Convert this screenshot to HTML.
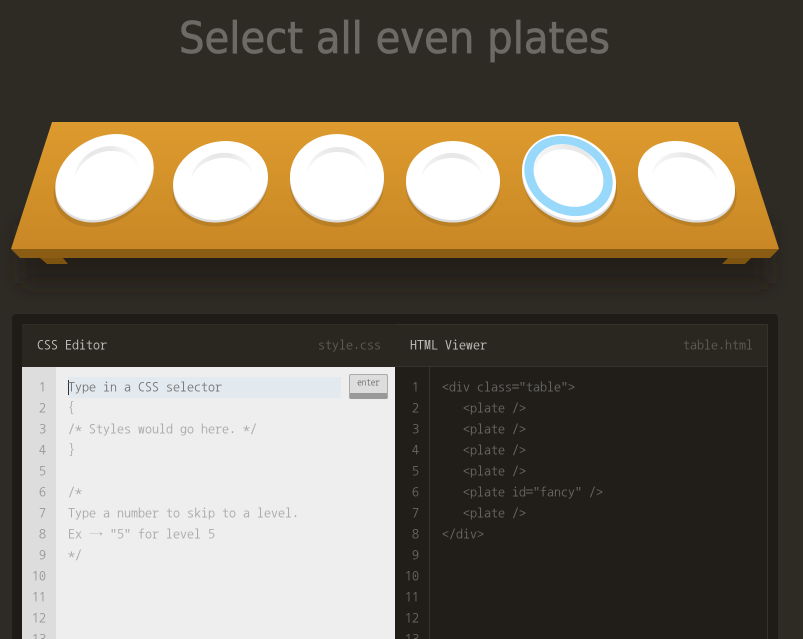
<!DOCTYPE html>
<html><head><meta charset="utf-8">
<style>
html,body{margin:0;padding:0;width:803px;height:639px;overflow:hidden;background:#2e2a24}
#w{position:absolute;left:0;top:0;width:803px;height:639px;overflow:hidden}
#s{position:absolute;left:0;top:0}
.mono{font-family:"NanumGothicCoding","Nanum Gothic Coding","IPAGothic",monospace;font-size:14px;line-height:21px;white-space:pre}
.mono i{font-style:normal;font-family:"Liberation Mono",monospace;font-size:11.67px;line-height:1}
.panel{position:absolute;left:12px;top:314px;width:766px;height:325px;background:#1f1c17;border-radius:4px 4px 0 0}
.hd{position:absolute;top:324px;height:43px;background:#2a2720;line-height:40px;box-sizing:border-box}
.abs{position:absolute}
</style></head><body>
<div id="w">
<svg id="s" width="803" height="310" viewBox="0 0 803 310">
<defs>
<linearGradient id="top" x1="0" y1="0" x2="0" y2="1"><stop offset="0" stop-color="#dd9a2e"/><stop offset="1" stop-color="#c98825"/></linearGradient>
<linearGradient id="cr" x1="0" y1="0" x2="1" y2="0"><stop offset="0" stop-color="#f6f6f6"/><stop offset=".4" stop-color="#e8e8e8"/><stop offset=".7" stop-color="#e8e8e8"/><stop offset="1" stop-color="#fbfbfb"/></linearGradient>
<filter id="b" x="-10%" y="-100%" width="120%" height="300%"><feGaussianBlur stdDeviation="9"/></filter>
</defs>
<rect width="803" height="310" fill="#2e2a24"/>
<rect x="22" y="225" width="746" height="58" fill="#221f18" opacity=".8" filter="url(#b)"/>
<text x="179" y="53" font-family="DejaVu Sans,sans-serif" font-size="44" fill="#6c6a64" stroke="#6c6a64" stroke-width=".8" textLength="431" lengthAdjust="spacingAndGlyphs">Select all even plates</text>
<polygon points="40,258 63,258 68,264 47,264" fill="#7f5310"/>
<polygon points="728,258 751,258 745,264 722,264" fill="#7f5310"/>
<polygon points="11,249 20,258 770,258 779,249" fill="#8a5c14"/>
<polygon points="52,122 738,122 779,249 11,249" fill="url(#top)"/>

<!-- plate 1 -->
<ellipse cx="0" cy="0" rx="52" ry="39.500" transform="translate(103 184) rotate(-30)" fill="#b97f24"/>
<ellipse cx="0" cy="0" rx="52" ry="39.500" transform="translate(104.500 179.500) rotate(-30)" fill="#dddddd"/>
<ellipse cx="0" cy="0" rx="52" ry="39.500" transform="translate(104.500 177) rotate(-30)" fill="#fff"/>
<ellipse cx="0" cy="0" rx="33" ry="28" transform="translate(107 175) rotate(-25)" fill="url(#cr)"/>
<ellipse cx="0" cy="0" rx="34" ry="28.500" transform="translate(107 180.500) rotate(-25)" fill="#fff"/>
<!-- plate 2 -->
<ellipse cx="0" cy="0" rx="48" ry="38.800" transform="translate(220 187) rotate(-15)" fill="#b97f24"/>
<ellipse cx="0" cy="0" rx="48" ry="38.800" transform="translate(220.500 183) rotate(-15)" fill="#dddddd"/>
<ellipse cx="0" cy="0" rx="48" ry="38.800" transform="translate(220.500 180.500) rotate(-15)" fill="#fff"/>
<ellipse cx="0" cy="0" rx="31" ry="25" transform="translate(222 178) rotate(-10)" fill="url(#cr)"/>
<ellipse cx="0" cy="0" rx="32" ry="25.500" transform="translate(222 183.500) rotate(-10)" fill="#fff"/>
<!-- plate 3 -->
<ellipse cx="337" cy="184" rx="47" ry="43" fill="#b97f24"/>
<ellipse cx="337" cy="179.500" rx="47" ry="43" fill="#dddddd"/>
<ellipse cx="337" cy="177" rx="47" ry="43" fill="#fff"/>
<ellipse cx="337.500" cy="175" rx="30.500" ry="28" fill="url(#cr)"/>
<ellipse cx="337.500" cy="180" rx="31.500" ry="28" fill="#fff"/>
<!-- plate 4 -->
<ellipse cx="453" cy="187" rx="47" ry="39.500" fill="#b97f24"/>
<ellipse cx="453" cy="183" rx="47" ry="39.500" fill="#dddddd"/>
<ellipse cx="453" cy="180.500" rx="47" ry="39.500" fill="#fff"/>
<ellipse cx="452" cy="178" rx="30.500" ry="25" fill="url(#cr)"/>
<ellipse cx="452" cy="183" rx="31.500" ry="25" fill="#fff"/>
<!-- plate 5 -->
<ellipse cx="0" cy="0" rx="48.800" ry="41" transform="translate(570 184) rotate(29.500)" fill="#b97f24"/>
<ellipse cx="0" cy="0" rx="48.800" ry="41" transform="translate(569 179.500) rotate(29.500)" fill="#dddddd"/>
<ellipse cx="0" cy="0" rx="48.800" ry="41" transform="translate(569 177) rotate(29.500)" fill="#fff"/>
<ellipse cx="0" cy="0" rx="46" ry="38" transform="translate(568.500 176) rotate(29.500)" fill="#97d8fb"/>
<ellipse cx="0" cy="0" rx="36.500" ry="29.500" transform="translate(568.500 175.500) rotate(29.500)" fill="#fff"/>
<ellipse cx="0" cy="0" rx="33" ry="27" transform="translate(567 172) rotate(20)" fill="url(#cr)"/>
<ellipse cx="0" cy="0" rx="33" ry="27" transform="translate(567 177) rotate(20)" fill="#fff"/>
<!-- plate 6 -->
<ellipse cx="0" cy="0" rx="50.500" ry="37" transform="translate(688 187) rotate(24)" fill="#b97f24"/>
<ellipse cx="0" cy="0" rx="50.500" ry="37" transform="translate(686.500 183) rotate(24)" fill="#dddddd"/>
<ellipse cx="0" cy="0" rx="50.500" ry="37" transform="translate(686.500 180.500) rotate(24)" fill="#fff"/>
<ellipse cx="0" cy="0" rx="33" ry="26" transform="translate(685 179) rotate(18)" fill="url(#cr)"/>
<ellipse cx="0" cy="0" rx="34" ry="26.500" transform="translate(685 184.500) rotate(18)" fill="#fff"/>
</svg>

<div class="panel"></div>
<div class="hd mono" style="left:22px;width:373px;color:#c4c2bd;padding-left:15px;border-top:1px solid #2f2c26">CSS Editor<span class="abs" style="right:14px;color:#5f5c56;top:0">style<i>.</i>css</span></div>
<div class="hd mono" style="left:395px;width:373px;color:#c4c2bd;padding-left:15px;border-top:1px solid #35322b;border-right:1px solid #35322b;border-bottom:1px solid #35322b">HTML Viewer<span class="abs" style="right:14px;color:#5f5c56;top:0">table<i>.</i>html</span></div>

<div class="abs" style="left:22px;top:367px;width:373px;height:272px;background:#eeeeee"></div>
<div class="abs" style="left:22px;top:367px;width:34px;height:272px;background:#dddddd"></div>
<div class="abs" style="left:68px;top:377px;width:273px;height:21px;background:#e2eaf0"></div>
<div class="abs" style="left:68px;top:380px;width:1px;height:15px;background:#333"></div>
<div class="abs" style="left:349px;top:374px;width:39px;height:25px;box-sizing:border-box;background:#dddddd;border:1px solid #aaa;border-bottom:6px solid #999;border-radius:2px;font:9px/16px 'NanumGothicCoding','IPAGothic',monospace;color:#666;text-align:center">enter</div>

<div class="abs" style="left:395px;top:367px;width:373px;height:272px;background:#211e19;box-sizing:border-box;border-right:1px solid #35322b"></div>
<div class="abs" style="left:429px;top:367px;width:1px;height:272px;background:#35322b"></div>

<div class="abs mono" style="left:16px;top:377px;width:30px;text-align:right;color:#999">1
2
3
4
5
6
7
8
9
10
11
12
13</div>
<div class="abs mono" style="left:68px;top:377px;color:#aaaaaa"><span style="color:#777">Type in a CSS selector</span>
{
/* Styles would go here<i>.</i> */
}

/*
Type a number to skip to a level<i>.</i>
Ex → <i>"</i>5<i>"</i> for level 5
*/</div>
<div class="abs mono" style="left:389px;top:377px;width:30px;text-align:right;color:#666">1
2
3
4
5
6
7
8
9
10
11
12
13</div>
<div class="abs mono" style="left:442px;top:377px;color:#666"><i>&lt;</i>div class=<i>"</i>table<i>"&gt;</i>
   <i>&lt;</i>plate /<i>&gt;</i>
   <i>&lt;</i>plate /<i>&gt;</i>
   <i>&lt;</i>plate /<i>&gt;</i>
   <i>&lt;</i>plate /<i>&gt;</i>
   <i>&lt;</i>plate id=<i>"</i>fancy<i>"</i> /<i>&gt;</i>
   <i>&lt;</i>plate /<i>&gt;</i>
<i>&lt;</i>/div<i>&gt;</i></div>
</div>
</body></html>
